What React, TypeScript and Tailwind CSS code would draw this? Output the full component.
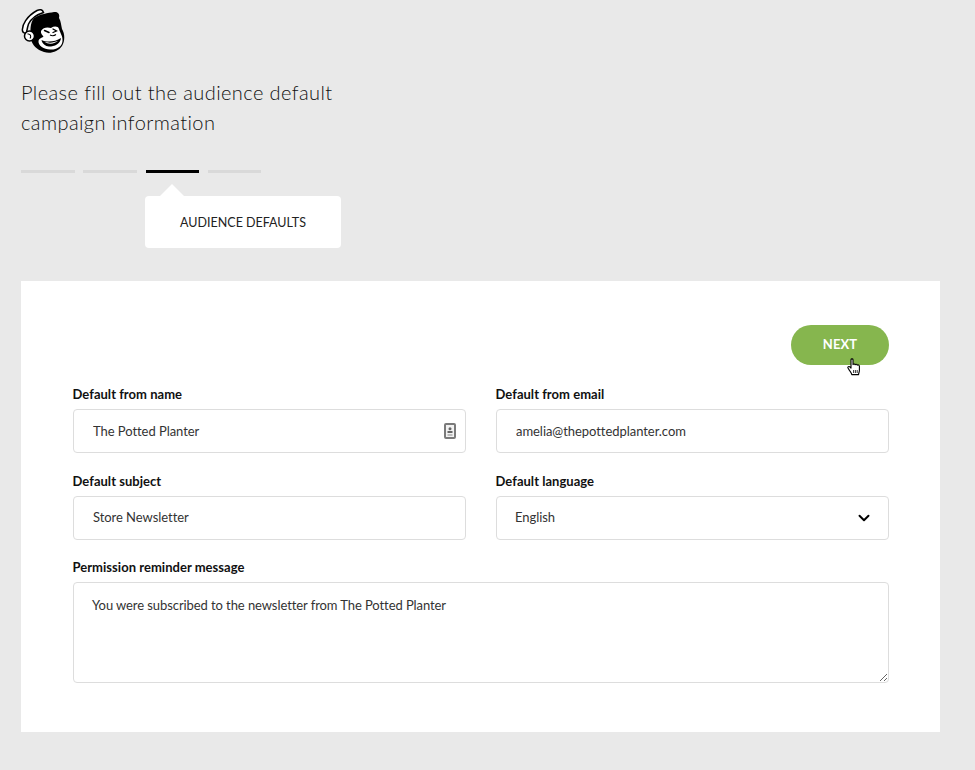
import { ChevronDown } from "lucide-react";

const STEPS = [false, false, true, false];

const fieldClass =
  "h-[44px] w-full rounded-[4px] border border-[#dddddd] bg-white pl-[19px] pr-[40px] text-[13px] tracking-[-0.05px] text-[#333] outline-none";

function Logo() {
  return (
    <svg width="46" height="46" viewBox="0 0 46 46" className="block">
      {/* head */}
      <path
        d="M13 10 C19 6 27 5 33 4 C37 3.5 39 6 38 10 C40 13 40 17 41 21 C44 26 44 33 41 38 C37 44 29 46 23 44 C16 42 11 37 10 31 C9 23 9 15 13 10 Z"
        fill="#000"
      />
      {/* cap */}
      <path
        d="M1.5 23 C0.5 17 6 8 16 2.5 C19 1 21.5 1.5 22.5 4.5 C16 6.5 10 11 7.5 16 C6.5 19 6 22 5.5 24.5 C4 25.5 2 25 1.5 23 Z"
        fill="#fff"
        stroke="#000"
        strokeWidth="1.5"
      />
      {/* ear */}
      <circle cx="8.5" cy="28" r="5" fill="#fff" stroke="#000" strokeWidth="1.5" />
      <path d="M6.5 26 C9.5 25.5 10.5 28.5 9 30.5" fill="none" stroke="#000" strokeWidth="1.1" />
      {/* face */}
      <path
        d="M20 23 C22 19 27 19 30 20 C33 18 37 18 38 21 C39 25 42 28 41.5 33 C41 39 35 42 29 41.5 C23 41 17 38 17.5 33 C18 30 21 30 22.5 28.5 C21 27 19.5 25 20 23 Z"
        fill="#fff"
      />
      {/* eyes and nose */}
      <path d="M23.5 22.5 L28 24.5" stroke="#000" strokeWidth="1.5" strokeLinecap="round" />
      <path d="M32 21 L35.5 23 L32 24.5" fill="none" stroke="#000" strokeWidth="1.3" strokeLinecap="round" />
      <path d="M29 27 C31 28 33 28 35 26.5" fill="none" stroke="#000" strokeWidth="1.1" />
      {/* mouth */}
      <path d="M20.5 32 C26 34.5 34 34 40 30 C39.5 36 33.5 38.5 28 38.5 C24.5 38.5 21 35.5 20.5 32 Z" fill="#000" />
      <path d="M23.5 33.8 C28 35.2 33 34.8 37 32.8 C34 36 27.5 36.8 23.5 33.8 Z" fill="#fff" />
    </svg>
  );
}

function HandCursor() {
  return (
    <svg width="14" height="18" viewBox="0 0 14 18" className="block">
      <path
        d="M4 1.8 C4 0.6 6 0.6 6 1.8 L6 6.6 C6.4 5.8 8 5.8 8.2 6.8 C8.6 6 10 6.2 10.2 7.2 C10.8 6.6 12.4 7 12.4 8.2 L12.4 12.4 C12.4 14 11.6 15 11.6 16.6 L4.8 16.6 C4.6 15 3.6 14 2.6 12.6 L1 10 C0.4 8.8 2 8 3 9 L4 10.2 Z"
        fill="#fff"
        stroke="#000"
        strokeWidth="1.1"
        strokeLinejoin="round"
      />
      <path d="M6.6 12 V15 M8.4 12 V15 M10.2 12 V15" stroke="#000" strokeWidth="0.8" />
    </svg>
  );
}

function ContactIcon() {
  return (
    <svg width="12" height="16" viewBox="0 0 12 16" className="block">
      <rect x="1" y="1" width="10" height="14" rx="1" fill="#f2f2f2" stroke="#7a7a7a" strokeWidth="2" />
      <circle cx="6" cy="5.8" r="1.5" fill="#666" />
      <rect x="3.5" y="8" width="5" height="2" fill="#666" />
      <rect x="3.5" y="11.4" width="5" height="1.2" fill="#999" />
    </svg>
  );
}

function Label({ htmlFor, text }: { htmlFor: string; text: string }) {
  return (
    <label htmlFor={htmlFor} className="mb-[5px] ml-[-0.5px] block h-[20px] text-[13px] font-bold leading-[20px] tracking-[0.03px] text-[#111]">
      {text}
    </label>
  );
}

export default function App() {
  return (
    <div className="min-h-[770px] bg-[#e9e9e9] px-[21px] pt-[8px] font-['Lato','Liberation_Sans',sans-serif]">
      <Logo />
      <h1 className="mt-[23px] w-[340px] text-[20px] font-light leading-[30px] tracking-[0.41px] text-[#111]">
        Please fill out the audience default campaign information
      </h1>

      <div className="mt-[33px] flex gap-[8.8px]">
        {STEPS.map((active, i) => (
          <div key={i} className={active ? "h-[3px] w-[53.5px] bg-black" : "h-[3px] w-[53.5px] bg-[#d9d9d9]"} />
        ))}
      </div>

      <div className="relative ml-[124px] mt-[23px] flex h-[52px] w-[196px] items-center justify-center rounded-[4px] bg-white pt-[2px] text-[12.5px] text-[#222]">
        <span className="absolute left-[15px] top-[-12px] h-0 w-0 border-x-[12px] border-b-[12px] border-x-transparent border-b-white" />
        AUDIENCE DEFAULTS
      </div>

      <div className="mt-[33px] h-[451px] w-[919px] bg-white pl-[52px] pr-[51px] pt-[44px]">
        <div className="relative flex justify-end">
          <button className="h-[40px] w-[98px] rounded-full bg-[#86b64e] text-[13px] font-bold tracking-[0.1px] text-white">
            NEXT
          </button>
          <span className="absolute right-[28px] top-[33px]">
            <HandCursor />
          </span>
        </div>

        <div className="mt-[19px] grid grid-cols-[393px_393px] gap-x-[30px] gap-y-[17.5px]">
          <div>
            <Label htmlFor="from-name" text="Default from name" />
            <div className="relative">
              <input id="from-name" defaultValue="The Potted Planter" className={fieldClass} />
              <span className="absolute right-[10px] top-[14px]">
                <ContactIcon />
              </span>
            </div>
          </div>
          <div>
            <Label htmlFor="from-email" text="Default from email" />
            <input id="from-email" defaultValue="amelia@thepottedplanter.com" className={fieldClass} />
          </div>
          <div>
            <Label htmlFor="subject" text="Default subject" />
            <input id="subject" defaultValue="Store Newsletter" className={`${fieldClass} pb-[2px]`} />
          </div>
          <div>
            <Label htmlFor="language" text="Default language" />
            <div className="relative">
              <select id="language" defaultValue="English" className={`${fieldClass} appearance-none !pl-[18px]`}>
                <option>English</option>
              </select>
              <ChevronDown size={18} strokeWidth={2.6} className="pointer-events-none absolute right-[16px] top-[13px] text-black" />
            </div>
          </div>
          <div className="col-span-2">
            <Label htmlFor="permission" text="Permission reminder message" />
            <textarea
              id="permission"
              defaultValue="You were subscribed to the newsletter from The Potted Planter"
              className="block h-[101px] w-full rounded-[4px] border border-[#dddddd] bg-white px-[18px] py-[13px] text-[13px] tracking-[-0.08px] text-[#333] outline-none"
            />
          </div>
        </div>
      </div>
    </div>
  );
}
